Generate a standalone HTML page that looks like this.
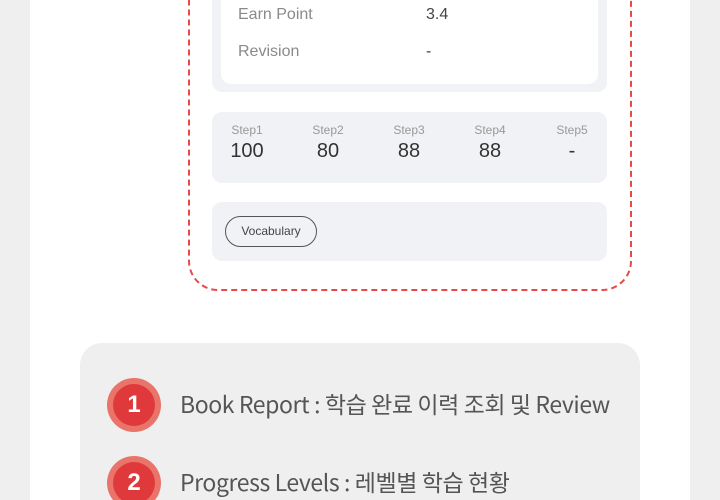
<!DOCTYPE html>
<html style="overflow:hidden;height:500px"><head><meta charset="utf-8"><style>
body{margin:0;width:720px;height:500px;overflow:hidden;background:#efefef;font-family:"Liberation Sans","Noto Sans CJK KR",sans-serif;position:relative}
.panel{position:absolute;left:30px;top:0;width:660px;height:500px;background:#fff}
.dash{position:absolute;left:188px;top:-40px;width:440px;height:327px;border:2px dashed #e84a4a;border-radius:30px}
.card{position:absolute;left:212px;width:395px;background:#f0f2f5;border-radius:10px}
.white{position:absolute;left:221px;top:-20px;width:377px;height:104px;background:#fff;border-radius:10px}
.lbl{position:absolute;font-size:16px;color:#8a8a8a}
.val{position:absolute;font-size:16px;color:#444}
.step{position:absolute;text-align:center;width:60px}
.step .s{font-size:12px;color:#999}
.step .n{font-size:20px;color:#333;margin-top:3px}
.pill{position:absolute;left:225px;top:216px;width:92px;height:31px;border:1.5px solid #555;border-radius:16px;font-size:12px;color:#444;text-align:center;line-height:29px;box-sizing:border-box}
.box{position:absolute;left:80px;top:343px;width:560px;height:157px;background:#efefef;border-radius:22px 22px 0 0}
.c{position:absolute;width:54px;height:54px;border-radius:50%;background:#e8746a}
.c div{position:absolute;left:6px;top:6px;width:42px;height:42px;border-radius:50%;background:#e0393b;color:#fff;font-weight:bold;font-size:24px;text-align:center;line-height:42px}
.t{position:absolute;left:180px;font-size:23px;color:#555;letter-spacing:-0.4px;font-family:"Noto Sans CJK KR","Liberation Sans",sans-serif}
</style></head><body>
<div class="panel"></div>
<div class="dash"></div>
<div class="card" style="top:-20px;height:112px"></div>
<div class="white"></div>
<div class="lbl" style="left:238px;top:6px">Earn Point</div>
<div class="val" style="left:426px;top:6px">3.4</div>
<div class="lbl" style="left:238px;top:43px">Revision</div>
<div class="val" style="left:426px;top:43px">-</div>
<div class="card" style="top:112px;height:71px"></div>
<div class="step" style="left:217px;top:123px"><div class="s">Step1</div><div class="n">100</div></div>
<div class="step" style="left:298px;top:123px"><div class="s">Step2</div><div class="n">80</div></div>
<div class="step" style="left:379px;top:123px"><div class="s">Step3</div><div class="n">88</div></div>
<div class="step" style="left:460px;top:123px"><div class="s">Step4</div><div class="n">88</div></div>
<div class="step" style="left:542px;top:123px"><div class="s">Step5</div><div class="n">-</div></div>
<div class="card" style="top:202px;height:59px"></div>
<div class="pill">Vocabulary</div>
<div class="box"></div>
<div class="c" style="left:107px;top:378px"><div>1</div></div>
<div class="t" style="top:386px">Book Report : 학습 완료 이력 조회 및 Review</div>
<div class="c" style="left:107px;top:456px"><div>2</div></div>
<div class="t" style="top:464px">Progress Levels : 레벨별 학습 현황</div>
</body></html>
